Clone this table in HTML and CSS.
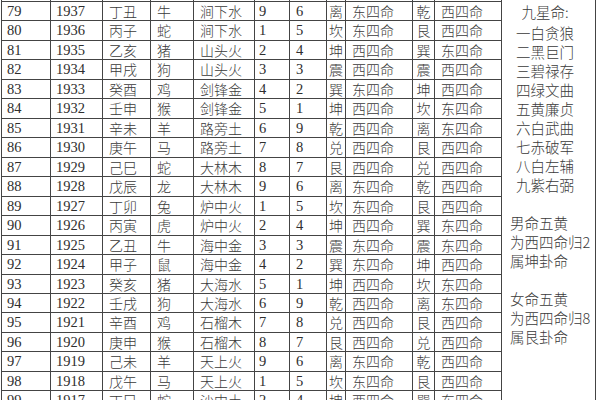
FILE: index.html
```html
<!DOCTYPE html>
<html lang="zh">
<head>
<meta charset="utf-8">
<title>九星命对照表</title>
<link rel="stylesheet" href="styles.css">
</head>
<body>
<div class="sheet">
  <div class="panel">
    <p class="title">九星命:</p>
    <div class="stars">一白贪狼<br>二黑巨门<br>三碧禄存<br>四绿文曲<br>五黄廉贞<br>六白武曲<br>七赤破军<br>八白左辅<br>九紫右弼</div>
    <div class="note">男命五黄<br>为西四命归2<br>属坤卦命</div>
    <div class="note">女命五黄<br>为西四命归8<br>属艮卦命</div>
  </div>

  <div class="c n"></div><div class="c y"></div><div class="c g"></div><div class="c a"></div><div class="c e"></div><div class="c d1"></div><div class="c d2"></div><div class="c k"></div><div class="c m"></div><div class="c k2"></div><div class="c m"></div>
  <div class="c n">79</div><div class="c y">1937</div><div class="c g">丁丑</div><div class="c a">牛</div><div class="c e">涧下水</div><div class="c d1">9</div><div class="c d2">6</div><div class="c k">离</div><div class="c m">东四命</div><div class="c k2">乾</div><div class="c m">西四命</div>
  <div class="c n">80</div><div class="c y">1936</div><div class="c g">丙子</div><div class="c a">蛇</div><div class="c e">涧下水</div><div class="c d1">1</div><div class="c d2">5</div><div class="c k">坎</div><div class="c m">东四命</div><div class="c k2">艮</div><div class="c m">西四命</div>
  <div class="c n">81</div><div class="c y">1935</div><div class="c g">乙亥</div><div class="c a">猪</div><div class="c e">山头火</div><div class="c d1">2</div><div class="c d2">4</div><div class="c k">坤</div><div class="c m">西四命</div><div class="c k2">巽</div><div class="c m">东四命</div>
  <div class="c n">82</div><div class="c y">1934</div><div class="c g">甲戌</div><div class="c a">狗</div><div class="c e">山头火</div><div class="c d1">3</div><div class="c d2">3</div><div class="c k">震</div><div class="c m">西四命</div><div class="c k2">震</div><div class="c m">西四命</div>
  <div class="c n">83</div><div class="c y">1933</div><div class="c g">癸酉</div><div class="c a">鸡</div><div class="c e">剑锋金</div><div class="c d1">4</div><div class="c d2">2</div><div class="c k">巽</div><div class="c m">东四命</div><div class="c k2">坤</div><div class="c m">西四命</div>
  <div class="c n">84</div><div class="c y">1932</div><div class="c g">壬申</div><div class="c a">猴</div><div class="c e">剑锋金</div><div class="c d1">5</div><div class="c d2">1</div><div class="c k">坤</div><div class="c m">西四命</div><div class="c k2">坎</div><div class="c m">东四命</div>
  <div class="c n">85</div><div class="c y">1931</div><div class="c g">辛未</div><div class="c a">羊</div><div class="c e">路旁土</div><div class="c d1">6</div><div class="c d2">9</div><div class="c k">乾</div><div class="c m">西四命</div><div class="c k2">离</div><div class="c m">东四命</div>
  <div class="c n">86</div><div class="c y">1930</div><div class="c g">庚午</div><div class="c a">马</div><div class="c e">路旁土</div><div class="c d1">7</div><div class="c d2">8</div><div class="c k">兑</div><div class="c m">西四命</div><div class="c k2">艮</div><div class="c m">西四命</div>
  <div class="c n">87</div><div class="c y">1929</div><div class="c g">己巳</div><div class="c a">蛇</div><div class="c e">大林木</div><div class="c d1">8</div><div class="c d2">7</div><div class="c k">艮</div><div class="c m">西四命</div><div class="c k2">兑</div><div class="c m">西四命</div>
  <div class="c n">88</div><div class="c y">1928</div><div class="c g">戊辰</div><div class="c a">龙</div><div class="c e">大林木</div><div class="c d1">9</div><div class="c d2">6</div><div class="c k">离</div><div class="c m">东四命</div><div class="c k2">乾</div><div class="c m">西四命</div>
  <div class="c n">89</div><div class="c y">1927</div><div class="c g">丁卯</div><div class="c a">兔</div><div class="c e">炉中火</div><div class="c d1">1</div><div class="c d2">5</div><div class="c k">坎</div><div class="c m">东四命</div><div class="c k2">艮</div><div class="c m">西四命</div>
  <div class="c n">90</div><div class="c y">1926</div><div class="c g">丙寅</div><div class="c a">虎</div><div class="c e">炉中火</div><div class="c d1">2</div><div class="c d2">4</div><div class="c k">坤</div><div class="c m">西四命</div><div class="c k2">巽</div><div class="c m">东四命</div>
  <div class="c n">91</div><div class="c y">1925</div><div class="c g">乙丑</div><div class="c a">牛</div><div class="c e">海中金</div><div class="c d1">3</div><div class="c d2">3</div><div class="c k">震</div><div class="c m">东四命</div><div class="c k2">震</div><div class="c m">东四命</div>
  <div class="c n">92</div><div class="c y">1924</div><div class="c g">甲子</div><div class="c a">鼠</div><div class="c e">海中金</div><div class="c d1">4</div><div class="c d2">2</div><div class="c k">巽</div><div class="c m">东四命</div><div class="c k2">坤</div><div class="c m">西四命</div>
  <div class="c n">93</div><div class="c y">1923</div><div class="c g">癸亥</div><div class="c a">猪</div><div class="c e">大海水</div><div class="c d1">5</div><div class="c d2">1</div><div class="c k">坤</div><div class="c m">西四命</div><div class="c k2">坎</div><div class="c m">东四命</div>
  <div class="c n">94</div><div class="c y">1922</div><div class="c g">壬戌</div><div class="c a">狗</div><div class="c e">大海水</div><div class="c d1">6</div><div class="c d2">9</div><div class="c k">乾</div><div class="c m">西四命</div><div class="c k2">离</div><div class="c m">东四命</div>
  <div class="c n">95</div><div class="c y">1921</div><div class="c g">辛酉</div><div class="c a">鸡</div><div class="c e">石榴木</div><div class="c d1">7</div><div class="c d2">8</div><div class="c k">兑</div><div class="c m">西四命</div><div class="c k2">艮</div><div class="c m">西四命</div>
  <div class="c n">96</div><div class="c y">1920</div><div class="c g">庚申</div><div class="c a">猴</div><div class="c e">石榴木</div><div class="c d1">8</div><div class="c d2">7</div><div class="c k">艮</div><div class="c m">西四命</div><div class="c k2">兑</div><div class="c m">西四命</div>
  <div class="c n">97</div><div class="c y">1919</div><div class="c g">己未</div><div class="c a">羊</div><div class="c e">天上火</div><div class="c d1">9</div><div class="c d2">6</div><div class="c k">离</div><div class="c m">东四命</div><div class="c k2">乾</div><div class="c m">西四命</div>
  <div class="c n">98</div><div class="c y">1918</div><div class="c g">戊午</div><div class="c a">马</div><div class="c e">天上火</div><div class="c d1">1</div><div class="c d2">5</div><div class="c k">坎</div><div class="c m">东四命</div><div class="c k2">艮</div><div class="c m">西四命</div>
  <div class="c n">99</div><div class="c y">1917</div><div class="c g">丁巳</div><div class="c a">蛇</div><div class="c e">沙中土</div><div class="c d1">2</div><div class="c d2">4</div><div class="c k">坤</div><div class="c m">西四命</div><div class="c k2">巽</div><div class="c m">东四命</div>
</div>
</body>
</html>
```
FILE: styles.css
```css
html, body {
  margin: 0;
  padding: 0;
  background: #ffffff;
  overflow: hidden;
}

body {
  font-family: "Liberation Serif", "Noto Sans CJK SC", serif;
  font-size: 14.5px;
  color: #2e2e2e;
}

.sheet {
  display: grid;
  grid-template-columns: 49px 52px 48px 43px 61px 35px 37px 19px 67px 22px 67px 94px;
  grid-auto-rows: 19.47px;
  margin-top: -17.5px;
  margin-left: 1px;
  width: max-content;
  border-left: 1px solid #444;
}

.c {
  box-sizing: border-box;
  border-right: 1px solid #444;
  border-bottom: 1px solid #444;
  line-height: 18.5px;
  white-space: nowrap;
  overflow: hidden;
}

.n { padding-left: 5px; }
.y { padding-left: 5px; }
.g { padding-left: 6px; }
.a { padding-left: 6px; }
.e { padding-left: 6px; }
.d1 { padding-left: 4px; }
.d2 { padding-left: 6px; }
.k { text-align: center; }
.k2 { text-align: center; }
.m { padding-left: 6px; }

.g, .a, .e, .k, .k2, .m, .panel {
  font-family: "Noto Sans CJK SC", sans-serif;
  font-size: 14px;
  font-weight: 300;
  color: #3a3a3a;
}

.k, .k2 {
  letter-spacing: -1px;
  text-indent: -1px;
}

.panel {
  grid-column: 12;
  grid-row: 1 / span 22;
  box-sizing: border-box;
  border-right: 1px solid #444;
  padding-top: 19.5px;
  line-height: 19px;
  font-size: 14.5px;
}

.title {
  margin: 0 0 2px 0;
  text-align: center;
  padding-right: 7px;
}

.stars {
  text-align: center;
  padding-right: 7px;
}

.note {
  margin-top: 19px;
  padding-left: 8px;
}
```
